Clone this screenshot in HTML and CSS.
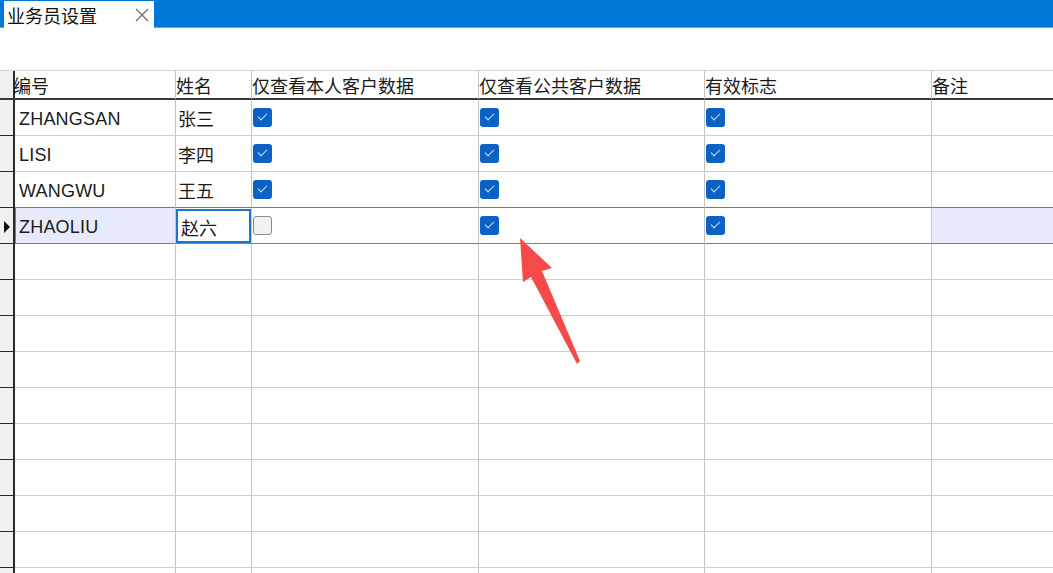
FILE: index.html
```html
<!DOCTYPE html>
<html lang="zh-CN">
	<head>
		<meta charset="UTF-8" />
		<meta name="viewport" content="width=device-width, initial-scale=1.0" />
		<title>业务员设置</title>
		<link rel="stylesheet" href="styles.css">
	</head>
	<body>
		<div class="titlebar">
			<div class="tab">
				<span class="tab-title">业务员设置</span>
				<svg class="tab-close" width="14" height="14" viewBox="0 0 14 14">
					<path d="M1 1 L13 13 M13 1 L1 13" stroke="#6e6e6e" stroke-width="1.3" fill="none" />
				</svg>
			</div>
		</div>

		<main class="grid">
			<div class="row head">
				<div class="cell c0"></div>
				<div class="cell c1 first">编号</div>
				<div class="cell c2">姓名</div>
				<div class="cell c3">仅查看本人客户数据</div>
				<div class="cell c4">仅查看公共客户数据</div>
				<div class="cell c5">有效标志</div>
				<div class="cell c6">备注</div>
			</div>

			<div class="row">
				<div class="cell c0"></div>
				<div class="cell c1 code">ZHANGSAN</div>
				<div class="cell c2 name">张三</div>
				<div class="cell c3"><span class="cb"></span></div>
				<div class="cell c4"><span class="cb"></span></div>
				<div class="cell c5"><span class="cb"></span></div>
				<div class="cell c6"></div>
			</div>
			<div class="row">
				<div class="cell c0"></div>
				<div class="cell c1 code">LISI</div>
				<div class="cell c2 name">李四</div>
				<div class="cell c3"><span class="cb"></span></div>
				<div class="cell c4"><span class="cb"></span></div>
				<div class="cell c5"><span class="cb"></span></div>
				<div class="cell c6"></div>
			</div>
			<div class="row">
				<div class="cell c0"></div>
				<div class="cell c1 code">WANGWU</div>
				<div class="cell c2 name">王五</div>
				<div class="cell c3"><span class="cb"></span></div>
				<div class="cell c4"><span class="cb"></span></div>
				<div class="cell c5"><span class="cb"></span></div>
				<div class="cell c6"></div>
			</div>
			<div class="row sel">
				<div class="cell c0"><span class="pointer"></span></div>
				<div class="cell c1 code">ZHAOLIU</div>
				<div class="cell c2"><div class="edit">赵六</div></div>
				<div class="cell c3"><span class="cb off"></span></div>
				<div class="cell c4"><span class="cb"></span></div>
				<div class="cell c5"><span class="cb"></span></div>
				<div class="cell c6"></div>
			</div>

			<!-- empty rows -->
			<div class="row"><div class="cell c0"></div><div class="cell c1"></div><div class="cell c2"></div><div class="cell c3"></div><div class="cell c4"></div><div class="cell c5"></div><div class="cell c6"></div></div>
			<div class="row"><div class="cell c0"></div><div class="cell c1"></div><div class="cell c2"></div><div class="cell c3"></div><div class="cell c4"></div><div class="cell c5"></div><div class="cell c6"></div></div>
			<div class="row"><div class="cell c0"></div><div class="cell c1"></div><div class="cell c2"></div><div class="cell c3"></div><div class="cell c4"></div><div class="cell c5"></div><div class="cell c6"></div></div>
			<div class="row"><div class="cell c0"></div><div class="cell c1"></div><div class="cell c2"></div><div class="cell c3"></div><div class="cell c4"></div><div class="cell c5"></div><div class="cell c6"></div></div>
			<div class="row"><div class="cell c0"></div><div class="cell c1"></div><div class="cell c2"></div><div class="cell c3"></div><div class="cell c4"></div><div class="cell c5"></div><div class="cell c6"></div></div>
			<div class="row"><div class="cell c0"></div><div class="cell c1"></div><div class="cell c2"></div><div class="cell c3"></div><div class="cell c4"></div><div class="cell c5"></div><div class="cell c6"></div></div>
			<div class="row"><div class="cell c0"></div><div class="cell c1"></div><div class="cell c2"></div><div class="cell c3"></div><div class="cell c4"></div><div class="cell c5"></div><div class="cell c6"></div></div>
			<div class="row"><div class="cell c0"></div><div class="cell c1"></div><div class="cell c2"></div><div class="cell c3"></div><div class="cell c4"></div><div class="cell c5"></div><div class="cell c6"></div></div>
			<div class="row"><div class="cell c0"></div><div class="cell c1"></div><div class="cell c2"></div><div class="cell c3"></div><div class="cell c4"></div><div class="cell c5"></div><div class="cell c6"></div></div>
			<div class="row"><div class="cell c0"></div><div class="cell c1"></div><div class="cell c2"></div><div class="cell c3"></div><div class="cell c4"></div><div class="cell c5"></div><div class="cell c6"></div></div>
		</main>

		<!-- annotation arrow drawn over the grid -->
		<svg class="annotation" width="1053" height="573" viewBox="0 0 1053 573">
			<polygon fill="#f44a4a" points="520,238 552,268 542,271 580,361 577,364 531,277 523,282" />
		</svg>
	</body>
</html>
```

FILE: styles.css
```css
body {
	margin: 0;
	width: 1053px;
	height: 573px;
	overflow: hidden;
	background: #fff;
	font-family: 'Liberation Sans', 'Noto Sans CJK SC', sans-serif;
	font-size: 18px;
	color: #1b1b1b;
	position: relative;
}

.titlebar {
	display: flex;
	height: 27px;
	background: #0078d7;
	border-bottom: 1px solid #9a9a9a;
}
.tab {
	display: flex;
	align-items: center;
	justify-content: space-between;
	width: 150px;
	margin: 1px 0 -1px 4px;
	padding: 0 5px 0 3px;
	box-sizing: border-box;
	background: #fff;
}
.tab-title {
	font-family: 'Noto Sans CJK SC', sans-serif;
	font-size: 18px;
	line-height: 26px;
	color: #111;
}
.tab-close {
	margin-top: 1px;
}

.grid {
	margin-top: 42px;
	border-top: 1px solid #d2d2d2;
}
.row {
	display: flex;
	height: 36px;
}
.cell {
	box-sizing: border-box;
	display: flex;
	align-items: center;
	border-right: 1px solid #c6c6c6;
	border-bottom: 1px solid #cdcdcd;
	white-space: nowrap;
	overflow: hidden;
}
.c0 {
	width: 15px;
	background: #f0f0f0;
	border-right: 2px solid #2a2a2a;
	border-bottom-color: #2a2a2a;
}
.c1 { width: 161px; }
.c2 { width: 76px; }
.c3 { width: 227px; }
.c4 { width: 226px; }
.c5 { width: 227px; }
.c6 { flex: 1; border-right: none; }

.head {
	height: 29px;
}
.head .cell {
	border-bottom: 2px solid #3a3a3a;
	padding-top: 1px;
	font-family: 'Noto Sans CJK SC', sans-serif;
}
.head .first {
	padding-left: 0;
	margin-left: -2px;
	width: 163px;
}

.code {
	padding: 3px 0 0 4px;
	letter-spacing: 0.2px;
}
.name {
	padding: 1px 0 0 2px;
	font-family: 'Noto Sans CJK SC', sans-serif;
}

.cb {
	position: relative;
	display: inline-block;
	width: 19px;
	height: 19px;
	margin-left: 1px;
	border-radius: 3px;
	background: #0b62c4;
	box-sizing: border-box;
}
.cb::after {
	content: '';
	position: absolute;
	left: 5px;
	top: 5px;
	width: 8px;
	height: 4px;
	border-left: 1.5px solid #d5e4f6;
	border-bottom: 1.5px solid #d5e4f6;
	transform: rotate(-45deg);
}
.cb.off {
	background: #f1f1f1;
	border: 1px solid #8c8c8c;
}
.cb.off::after {
	display: none;
}

.sel {
	height: 37px;
	margin-top: -1px;
}
.sel .cell {
	border-top: 1px solid #3090e6;
	border-bottom-color: #3090e6;
}
.sel .c0 {
	border-top-color: #2a2a2a;
	border-bottom-color: #2a2a2a;
}
.sel .c1 {
	background: #e7eafa;
	box-shadow: inset 1px 0 #3090e6;
}
.sel .c6 {
	background: #e7eafa;
}
.edit {
	box-sizing: border-box;
	width: 75px;
	height: 34px;
	margin-top: 1px;
	padding: 1px 0 0 3px;
	border: 2px solid #1f74d0;
	background: #fff;
	display: flex;
	align-items: center;
	font-family: 'Noto Sans CJK SC', sans-serif;
}
.pointer {
	width: 0;
	height: 0;
	margin: 2px 0 0 4px;
	border-top: 6px solid transparent;
	border-bottom: 6px solid transparent;
	border-left: 6px solid #111;
}

.annotation {
	position: absolute;
	left: 0;
	top: 0;
	pointer-events: none;
}
```
